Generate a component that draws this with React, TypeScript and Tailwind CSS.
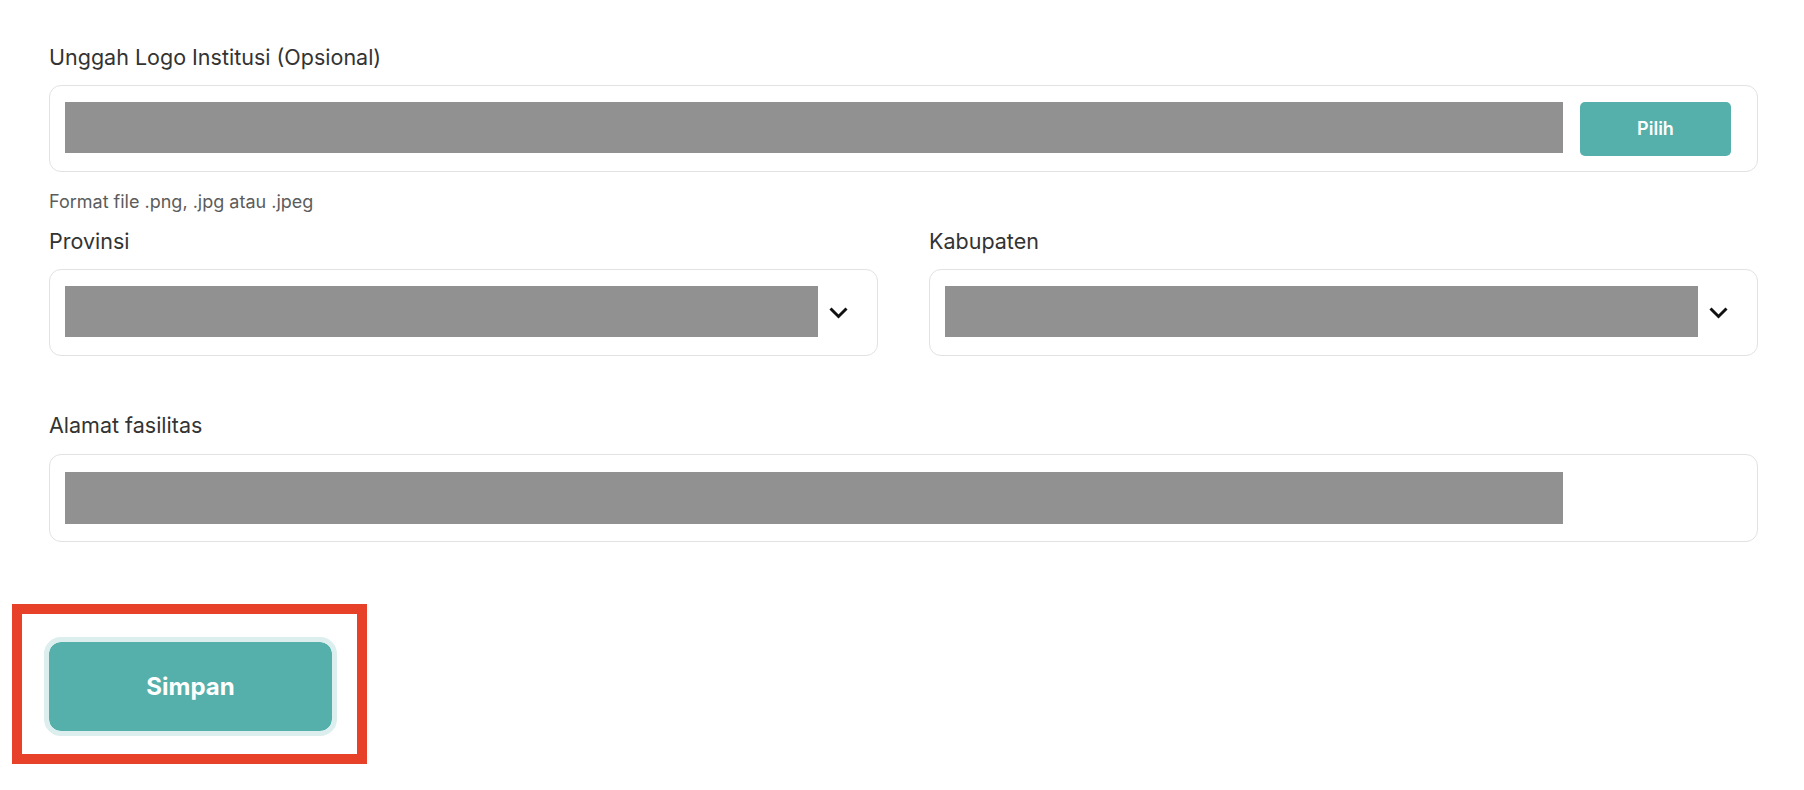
import React from "react";

function Chevron() {
  return (
    <svg width="19" height="12" viewBox="0 0 19 12" className="shrink-0 ml-[11px] mr-[29px]">
      <path d="M1.5 1.5 L9.5 9.5 L17.5 1.5" fill="none" stroke="#111" strokeWidth="3" strokeLinejoin="miter" />
    </svg>
  );
}

function Label({ children, className = "" }: { children: React.ReactNode; className?: string }) {
  return <div className={`text-[21.5px] leading-[28px] text-[#333333] ${className}`}>{children}</div>;
}

export default function App() {
  return (
    <div className="min-h-[790px] w-full bg-white font-['Inter','Liberation_Sans',sans-serif]">
      <div className="pl-[49px] pr-[46px] pt-[43px]">
        <Label className="mb-[14px]">Unggah Logo Institusi (Opsional)</Label>
        <div className="h-[87px] rounded-[12px] border border-[#e2e2e2] flex items-center pl-[15px] pr-[26px]">
          <div className="flex-1 h-[51px] bg-[#919191] -mt-[3px]" />
          <button className="ml-[17px] w-[151px] h-[54px] rounded-[5px] bg-[#55b0ab] text-white text-[18px] font-semibold">
            Pilih
          </button>
        </div>
        <div className="mt-[18px] text-[18px] leading-[24px] text-[#5c5c5c]">Format file .png, .jpg atau .jpeg</div>

        <div className="grid grid-cols-2 gap-x-[51px] mt-[13px]">
          <div>
            <Label className="mb-[14px]">Provinsi</Label>
            <div className="h-[87px] rounded-[12px] border border-[#e2e2e2] flex items-center pl-[15px]">
              <div className="flex-1 h-[51px] bg-[#919191] -mt-[2px]" />
              <Chevron />
            </div>
          </div>
          <div>
            <Label className="mb-[14px]">Kabupaten</Label>
            <div className="h-[87px] rounded-[12px] border border-[#e2e2e2] flex items-center pl-[15px]">
              <div className="flex-1 h-[51px] bg-[#919191] -mt-[2px]" />
              <Chevron />
            </div>
          </div>
        </div>

        <Label className="mt-[55px] mb-[15px]">Alamat fasilitas</Label>
        <div className="h-[88px] rounded-[12px] border border-[#e2e2e2] flex items-center pl-[15px]">
          <div className="w-[1498px] h-[52px] bg-[#919191]" />
        </div>
      </div>

      <div className="ml-[12px] mt-[62px] w-fit border-[10px] border-[#e8412a] pl-[22px] pr-[20px] pt-[23px] pb-[18px]">
        <button className="w-[293px] h-[99px] rounded-[17px] border-[5px] border-[#dceeed] bg-[#55b0ab] bg-clip-padding text-white text-[24px] font-bold flex items-center justify-center">
          Simpan
        </button>
      </div>
    </div>
  );
}
